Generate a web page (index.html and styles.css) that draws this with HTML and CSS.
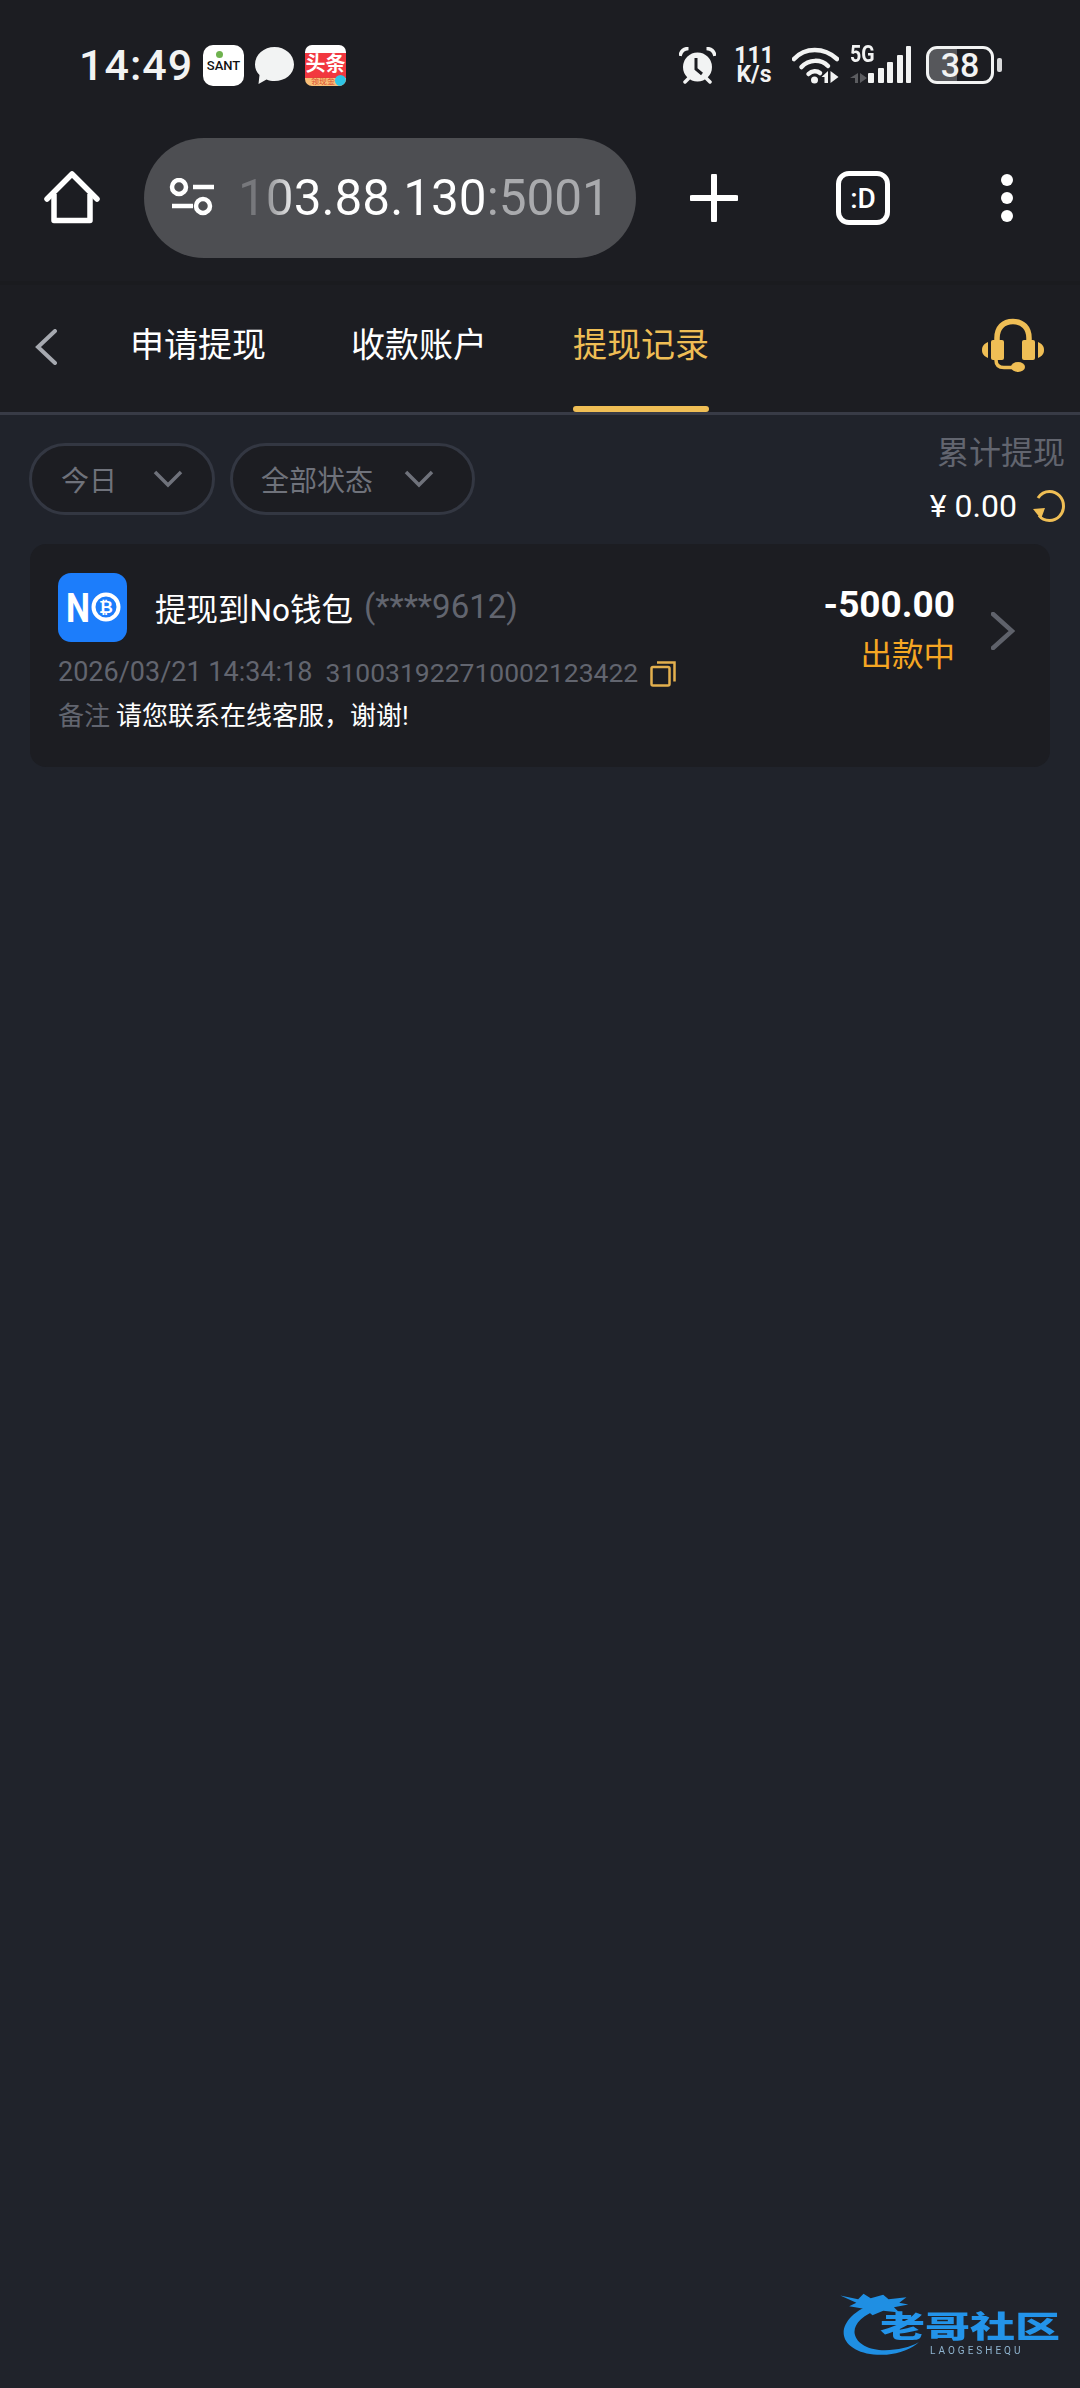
FILE: index.html
```html
<!DOCTYPE html>
<html lang="zh">
<head>
    <meta charset="UTF-8">
    <meta name="viewport" content="width=device-width, initial-scale=1.0">
    <title>提现记录</title>
    <link rel="stylesheet" href="styles.css">
</head>
<body>

    <div class="status-bar">
        <span class="time">14:49</span>
        <div class="app-sant">
            <i class="sant-dot"></i>
            <span>SANT</span>
        </div>
        <svg class="app-bubble" viewBox="0 0 39 37"><path d="M19.5 0C30 0 39 7.500 39 17.500S30 34 19.500 34c-3 0-5.500-.5-8-1.500L3.500 37l1-9C1.500 25 0 21.500 0 17.500 0 7.500 9 0 19.500 0z" fill="#f2f3f3"/></svg>
        <div class="app-toutiao">
            <span class="toutiao-title">头条</span>
            <span class="toutiao-sub">领现金</span>
            <i class="toutiao-badge"></i>
        </div>

        <div class="status-right">
            <svg class="ic-alarm" viewBox="0 0 37 37">
                <circle cx="18.500" cy="20" r="14.500" fill="#f2f3f3"/>
                <path d="M1 9C2 4 5 1.500 9.500 1.500M36 9C35 4 32 1.500 27.500 1.500" fill="none" stroke="#f2f3f3" stroke-width="3.500"/>
                <path d="M6 35l4-4M31 35l-4-4" stroke="#f2f3f3" stroke-width="3.500" stroke-linecap="round"/>
                <path d="M17 11v11l6 5" fill="none" stroke="#1c1d22" stroke-width="3"/>
            </svg>
            <div class="net-speed">111
K/s</div>
            <svg class="ic-wifi" viewBox="0 0 47 38">
                <path d="M2 13C13 1 32 1 45 13" fill="none" stroke="#f2f3f3" stroke-width="4.500" stroke-linecap="round"/>
                <path d="M9.500 21C17 13 29 13 36 20" fill="none" stroke="#f2f3f3" stroke-width="4.500" stroke-linecap="round"/>
                <path d="M16.500 28C20 24.500 25 24.500 28 27" fill="none" stroke="#f2f3f3" stroke-width="4.500" stroke-linecap="round"/>
                <circle cx="22.500" cy="34" r="3.500" fill="#f2f3f3"/>
                <path d="M36 25v12h-3.500v-6h-3zM38.500 25l8 6-8 6z" fill="#f2f3f3"/>
            </svg>
            <div class="cell">
                <span class="cell-type">5G</span>
                <svg class="ic-signal" viewBox="0 0 61 38">
                    <path d="M8 27v10H5v-5H0zM10 27l7 5-7 5z" fill="#5b5c60"/>
                    <rect x="18" y="27" width="6" height="10" rx="1" fill="#f2f3f3"/>
                    <rect x="28" y="22" width="6" height="15" rx="1" fill="#f2f3f3"/>
                    <rect x="37" y="16" width="6" height="21" rx="1" fill="#f2f3f3"/>
                    <rect x="47" y="9" width="6" height="28" rx="1" fill="#f2f3f3"/>
                    <rect x="56" y="0" width="5" height="37" rx="1" fill="#f2f3f3"/>
                </svg>
            </div>
            <div class="battery">
                <div class="battery-body">
                    <span>38</span>
                </div>
                <i class="battery-nub"></i>
            </div>
        </div>
    </div>

    <div class="toolbar">
        <svg class="ic-home" viewBox="0 0 60 60">
            <path d="M7 31L32 6l25 25" fill="none" stroke="#fff" stroke-width="5.500" stroke-linecap="round" stroke-linejoin="round"/>
            <path d="M14 26v26.500h36V26" fill="none" stroke="#fff" stroke-width="5.500" stroke-linejoin="round"/>
        </svg>
        <div class="url-pill">
            <svg class="ic-site" viewBox="0 0 46 40">
                <circle cx="11" cy="9" r="7" fill="none" stroke="#fff" stroke-width="4.500"/>
                <path d="M25 9h21M4 28h21" stroke="#fff" stroke-width="4.500"/>
                <circle cx="35" cy="28" r="7" fill="none" stroke="#fff" stroke-width="4.500"/>
            </svg>
            <span class="url-text"><span class="url-host">103.88.130</span><span class="url-port">:5001</span></span>
        </div>
        <svg class="ic-plus" viewBox="0 0 48 48">
            <path d="M24 2v44M2 24h44" stroke="#fff" stroke-width="6" stroke-linecap="round"/>
        </svg>
        <div class="tab-count">:D</div>
        <div class="more-dots">
            <i></i><i></i><i></i>
        </div>
    </div>

    <div class="nav">
        <svg class="ic-back" viewBox="0 0 22 36">
            <path d="M20 2L3 18l17 16" fill="none" stroke="#a6a9b0" stroke-width="4" stroke-linecap="round"/>
        </svg>
        <a class="nav-tab">申请提现</a>
        <a class="nav-tab">收款账户</a>
        <a class="nav-tab active">提现记录</a>
        <svg class="ic-headset" viewBox="0 0 62 54">
            <path d="M15 25V20C15 10 21 3.500 31 3.500S47 10 47 20v5" fill="none" stroke="#efbe55" stroke-width="5.500"/>
            <rect x="9" y="22" width="13" height="20" rx="2" fill="#efbe55"/>
            <rect x="40" y="22" width="13" height="20" rx="2" fill="#efbe55"/>
            <path d="M6 24v16C2 38 0 36 0 32s2-6 6-8zM56 24v16c4-2 6-4 6-8s-2-6-6-8z" fill="#efbe55"/>
            <path d="M14 42c0 5 3 7.500 8 7.500h10" fill="none" stroke="#efbe55" stroke-width="3.500"/>
            <ellipse cx="36" cy="49" rx="7" ry="5" fill="#efbe55"/>
        </svg>
    </div>

    <div class="filter-row">
        <div class="filter-pill pill-date">
            <span>今日</span>
            <svg class="ic-drop" viewBox="0 0 30 18"><path d="M2 2l13 13L28 2" fill="none" stroke="#6f727b" stroke-width="3.500"/></svg>
        </div>
        <div class="filter-pill pill-state">
            <span>全部状态</span>
            <svg class="ic-drop" viewBox="0 0 30 18"><path d="M2 2l13 13L28 2" fill="none" stroke="#6f727b" stroke-width="3.500"/></svg>
        </div>
        <div class="total">
            <div class="total-label">累计提现</div>
            <div class="total-value">
                <span class="total-yen">¥</span>
                <span>0.00</span>
                <svg class="ic-refresh" viewBox="0 0 32 32">
                    <path d="M5 8C8 3.500 12 1.500 16.500 1.500 24.500 1.500 30.500 8 30.500 16S24.500 30.500 16.500 30.500C12 30.500 8.500 29 6 25.500" fill="none" stroke="#efbe55" stroke-width="3"/>
                    <path d="M0 19l12-1-4 11z" fill="#efbe55"/>
                </svg>
            </div>
        </div>
    </div>

    <div class="record">
        <div class="record-main">
            <div class="record-title">
                <svg class="no-logo" viewBox="0 0 69 69">
                    <rect width="69" height="69" rx="13" fill="#1c7dfb"/>
                    <text x="8" y="49" class="no-letter" textLength="24" lengthAdjust="spacingAndGlyphs">N</text>
                    <circle cx="48" cy="34" r="12.500" fill="none" stroke="#fff" stroke-width="4"/>
                    <text x="48" y="40" class="no-coin" text-anchor="middle">₿</text>
                </svg>
                <span class="title-text">提现到No钱包</span>
                <span class="title-card">(****9612)</span>
            </div>
            <div class="record-meta">
                <span>2026/03/21 14:34:18</span>
                <span class="order-no">310031922710002123422</span>
                <svg class="ic-copy" viewBox="0 0 26 26">
                    <rect x="1.500" y="6" width="18" height="18.500" rx="1.500" fill="none" stroke="#e3b04e" stroke-width="2.500"/>
                    <path d="M7 1.500h17.500v19" fill="none" stroke="#e3b04e" stroke-width="2.500"/>
                </svg>
            </div>
            <div class="record-note">
                <span class="note-label">备注</span>
                <span>请您联系在线客服，谢谢!</span>
            </div>
        </div>
        <div class="record-side">
            <div class="amount">-500.00</div>
            <div class="state">出款中</div>
        </div>
        <svg class="ic-more" viewBox="0 0 24 38">
            <path d="M2 2l19 17L2 36" fill="none" stroke="#5f626b" stroke-width="4.500" stroke-linecap="round"/>
        </svg>
    </div>

    <div class="watermark">
        <svg class="wm-dragon" viewBox="0 0 100 76">
            <path d="M40 12C14 20 2 36 4 48c2 14 22 24 48 22 14-1 28-6 36-14-10 6-24 9-38 9C32 65 18 58 16 46 15 36 24 26 46 18z" fill="#1f8fe3"/>
            <path d="M0 4l20 4 6-6 8 5 14-4 6 5 20-2-8 6 10 2-16 3 6 6-18-2-12 5-8-7-18-3 8-4z" fill="#1f8fe3"/>
        </svg>
        <div class="wm-name">老哥社区</div>
        <div class="wm-sub">LAOGESHEQU</div>
    </div>

</body>
</html>
```
FILE: styles.css
```css
* {
    box-sizing: border-box;
}

body {
    margin: 0;
    width: 1080px;
    height: 2388px;
    overflow: hidden;
    position: relative;
    background-color: #20232b;
    color: #fff;
    font-family: Roboto, "Noto Sans CJK SC", sans-serif;
}

svg {
    display: block;
    flex-shrink: 0;
}

/* status bar */
.status-bar {
    height: 130px;
    display: flex;
    align-items: center;
    padding: 0 78px 0 79px;
    background-color: #1c1d22;
}

.time {
    width: 124px;
    font-size: 43px;
    font-weight: 500;
    color: #f2f3f3;
    letter-spacing: 1px;
}

.app-sant {
    width: 41px;
    height: 41px;
    border-radius: 10px;
    background-color: #fff;
    color: #111;
    font-size: 13px;
    font-weight: 500;
    display: flex;
    flex-direction: column;
    align-items: center;
    padding-top: 13px;
    position: relative;
}

.sant-dot {
    position: absolute;
    top: 6px;
    left: 13px;
    width: 7px;
    height: 7px;
    border-radius: 50%;
    background-color: #6fb24f;
}

.app-bubble {
    width: 39px;
    height: 37px;
    margin-left: 11px;
}

.app-toutiao {
    width: 41px;
    height: 41px;
    margin-left: 11px;
    border-radius: 7px;
    overflow: hidden;
    position: relative;
    background: linear-gradient(#fff 0, #fff 8px, #f2373f 8px, #f2373f 33px, #f9bf78 33px);
}

.toutiao-title {
    position: absolute;
    top: 6px;
    left: 0;
    width: 41px;
    text-align: center;
    font-size: 20px;
    line-height: 26px;
    font-weight: 700;
    color: #fff;
}

.toutiao-sub {
    position: absolute;
    top: 32px;
    left: 6px;
    font-size: 8px;
    line-height: 9px;
    color: #d6492d;
}

.toutiao-badge {
    position: absolute;
    right: 0;
    bottom: 0;
    width: 11px;
    height: 11px;
    border-radius: 50%;
    background-color: #2ec4e6;
}

.status-right {
    margin-left: auto;
    display: flex;
    align-items: center;
}

.ic-alarm {
    width: 37px;
    height: 37px;
}

.net-speed {
    width: 40px;
    margin-left: 18px;
    color: #f2f3f3;
    font-size: 23px;
    font-weight: 700;
    line-height: 19px;
    text-align: center;
    white-space: pre-line;
}

.ic-wifi {
    width: 47px;
    height: 38px;
    margin-left: 18px;
}

.cell {
    width: 61px;
    margin-left: 11px;
    position: relative;
}

.cell-type {
    position: absolute;
    left: 0;
    top: -4px;
    font-size: 23px;
    line-height: 26px;
    font-weight: 700;
    color: #f2f3f3;
    transform: scaleX(0.85);
    transform-origin: left;
}

.ic-signal {
    width: 61px;
    height: 38px;
}

.battery {
    margin-left: 15px;
    display: flex;
    align-items: center;
    gap: 3px;
}

.battery-body {
    width: 68px;
    height: 38px;
    border: 3px solid #f2f3f3;
    border-radius: 11px;
    background: linear-gradient(90deg, #56575b 0, #56575b 28px, transparent 28px);
    color: #f2f3f3;
    font-size: 34px;
    font-weight: 500;
    line-height: 32px;
    text-align: center;
}

.battery-nub {
    width: 5px;
    height: 14px;
    border-radius: 2px;
    background-color: #d8d9da;
}

/* browser toolbar */
.toolbar {
    height: 155px;
    display: flex;
    align-items: flex-start;
    padding: 8px 0 0 40px;
    background-color: #1c1d22;
    border-bottom: 4px solid #1a1b1f;
}

.ic-home {
    width: 60px;
    height: 60px;
    margin-top: 30px;
}

.url-pill {
    width: 492px;
    height: 120px;
    margin-left: 44px;
    padding-left: 24px;
    border-radius: 60px;
    background-color: #4d4e52;
    display: flex;
    align-items: center;
}

.ic-site {
    width: 46px;
    height: 40px;
}

.url-text {
    margin-left: 24px;
    font-size: 49.5px;
    white-space: nowrap;
}

.url-host {
    background: linear-gradient(90deg, #77787c 0, #77787c 22px, #fff 60px);
    -webkit-background-clip: text;
    background-clip: text;
    color: transparent;
}

.url-port {
    color: #a9aaad;
}

.ic-plus {
    width: 48px;
    height: 48px;
    margin: 36px 0 0 54px;
}

.tab-count {
    width: 54px;
    height: 54px;
    margin: 33px 0 0 98px;
    border: 5px solid #fff;
    border-radius: 13px;
    display: flex;
    align-items: center;
    justify-content: center;
    font-size: 28px;
    font-weight: 500;
}

.more-dots {
    margin: 36px 0 0 111px;
    display: flex;
    flex-direction: column;
    gap: 6px;
}

.more-dots i {
    display: block;
    width: 12px;
    height: 12px;
    border-radius: 50%;
    background-color: #fff;
}

/* page tabs */
.nav {
    height: 130px;
    display: flex;
    background-color: #1c1d22;
    border-bottom: 3px solid #383b46;
    position: relative;
}

.ic-back {
    width: 22px;
    height: 36px;
    margin: 44px 0 0 35px;
}

.nav-tab {
    height: 127px;
    margin-left: 85px;
    padding-top: 36px;
    font-size: 34px;
    line-height: 48px;
    white-space: nowrap;
    color: #fff;
    position: relative;
}

.nav-tab:first-of-type {
    margin-left: 73px;
}

.nav-tab.active {
    color: #efbe55;
    margin-left: 86px;
}

.nav-tab.active::after {
    content: "";
    position: absolute;
    left: 0;
    right: 0;
    bottom: 0;
    height: 6px;
    border-radius: 3px;
    background-color: #efbe55;
}

.ic-headset {
    width: 62px;
    height: 54px;
    margin: 33px 0 0 auto;
    margin-right: 36px;
}

/* filters */
.filter-row {
    height: 129px;
    display: flex;
    align-items: flex-start;
    padding: 28px 15px 0 29px;
}

.filter-pill {
    height: 72px;
    border: 3px solid #333742;
    border-radius: 36px;
    background-color: #1c1d22;
    color: #6f727b;
    font-size: 28px;
    display: flex;
    align-items: center;
    white-space: nowrap;
}

.pill-date {
    width: 186px;
    padding-left: 29px;
}

.pill-state {
    width: 245px;
    margin-left: 15px;
    padding-left: 28px;
}

.ic-drop {
    width: 30px;
    height: 18px;
    margin-left: 36px;
}

.pill-state .ic-drop {
    margin-left: 31px;
}

.total {
    margin: -12px 0 0 auto;
    display: flex;
    flex-direction: column;
    align-items: flex-end;
    gap: 9px;
}

.total-label {
    font-size: 32px;
    line-height: 44px;
    color: #62656f;
}

.total-value {
    height: 44px;
    display: flex;
    align-items: center;
    font-size: 32px;
    color: #fff;
}

.total-yen {
    margin-right: 8px;
}

.ic-refresh {
    width: 32px;
    height: 32px;
    margin-left: 16px;
}

/* record card */
.record {
    width: 1020px;
    height: 223px;
    margin-left: 30px;
    padding: 29px 35px 0 28px;
    border-radius: 16px;
    background-color: #1c1d22;
    display: flex;
    align-items: flex-start;
}

.record-main {
    flex: 1;
}

.record-title {
    height: 69px;
    display: flex;
    align-items: center;
    white-space: nowrap;
    padding-bottom: 2px;
}

.no-logo {
    width: 69px;
    height: 69px;
    margin-bottom: -2px;
}

.no-letter {
    font-family: Roboto, sans-serif;
    font-size: 40px;
    font-weight: 700;
    fill: #fff;
}

.no-coin {
    font-family: "DejaVu Sans", sans-serif;
    font-size: 17px;
    font-weight: 700;
    fill: #fff;
}

.title-text {
    margin-left: 28px;
    font-size: 31.5px;
}

.title-card {
    margin-left: 11px;
    font-size: 33px;
    color: #62656f;
}

.record-meta {
    height: 34px;
    margin-top: 13px;
    display: flex;
    align-items: center;
    color: #62656f;
    font-size: 27px;
    white-space: nowrap;
}

.order-no {
    margin-left: 13px;
    font-size: 26.5px;
}

.ic-copy {
    width: 26px;
    height: 26px;
    margin-left: 12px;
    margin-top: 4px;
}

.record-note {
    height: 34px;
    margin-top: 7px;
    display: flex;
    align-items: center;
    gap: 6px;
    font-size: 26px;
    white-space: nowrap;
}

.note-label {
    color: #62656f;
}

.record-side {
    padding-top: 10px;
    padding-right: 2px;
    text-align: right;
    white-space: nowrap;
}

.amount {
    font-size: 37px;
    font-weight: 700;
    line-height: 44px;
}

.state {
    margin-top: 7px;
    font-size: 31.5px;
    line-height: 44px;
    color: #f5a623;
}

.ic-more {
    width: 24px;
    height: 38px;
    margin: 39px 0 0 34px;
}

/* watermark */
.watermark {
    position: absolute;
    left: 838px;
    top: 2292px;
    width: 230px;
    height: 72px;
    filter: blur(0.7px);
}

.wm-dragon {
    position: absolute;
    left: 0;
    top: 0;
    width: 94px;
    height: 68px;
}

/* the logo's letters are wider than they are tall */
.wm-name {
    position: absolute;
    left: 42px;
    top: 16px;
    font-size: 30px;
    line-height: 38px;
    font-weight: 900;
    white-space: nowrap;
    color: #2394ea;
    transform: scaleX(1.5);
    transform-origin: left;
}

.wm-sub {
    position: absolute;
    left: 92px;
    top: 53px;
    font-size: 10px;
    line-height: 12px;
    letter-spacing: 3px;
    color: #8fb4cf;
}
```
